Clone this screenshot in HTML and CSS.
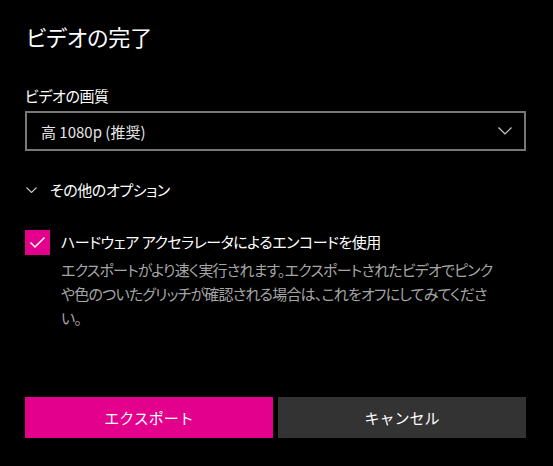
FILE: index.html
```html
<!DOCTYPE html>
<html lang="ja">
<head>
    <meta charset="UTF-8">
    <meta name="viewport" content="width=device-width, initial-scale=1.0">
    <title>ビデオの完了</title>
    <link rel="stylesheet" href="styles.css">
</head>
<body>
    <div class="dialog">
        <h1>ビデオの完了</h1>

        <!-- Quality -->
        <div class="field-label">ビデオの画質</div>
        <div class="select">
            <span>高 1080p (推奨)</span>
            <svg class="chevron" width="14" height="8" viewBox="0 0 14 8">
                <path d="M0.5 0.5 L7 7 L13.5 0.5" fill="none" stroke="#cccccc" stroke-width="1.2"/>
            </svg>
        </div>

        <!-- More options -->
        <div class="more">
            <svg class="chevron" width="11" height="6" viewBox="0 0 11 6">
                <path d="M0.5 0.5 L5.5 5.5 L10.5 0.5" fill="none" stroke="#cccccc" stroke-width="1.1"/>
            </svg>
            <span>その他のオプション</span>
        </div>

        <div class="check-row">
            <div class="checkbox">
                <svg width="25" height="25" viewBox="0 0 25 25">
                    <path d="M5.5 12.5 L10 17 L19.5 7.5" fill="none" stroke="#ffffff" stroke-width="1.5"/>
                </svg>
            </div>
            <div class="check-text">
                <div class="check-label">ハードウェア アクセラレータによるエンコードを使用</div>
                <div class="check-desc">エクスポートがより速く実行されます。エクスポートされたビデオでピンクや色のついたグリッチが確認される場合は、これをオフにしてみてください。</div>
            </div>
        </div>

        <div class="buttons">
            <button class="primary">エクスポート</button>
            <button class="secondary">キャンセル</button>
        </div>
    </div>
</body>
</html>
```

FILE: styles.css
```css
body {
    margin: 0;
    padding: 0;
    background-color: #000000;
    color: #ffffff;
    font-family: "Noto Sans CJK JP", "Noto Sans", sans-serif;
    font-feature-settings: "palt";
}
.dialog {
    padding: 20px 27px 0 25px;
}
h1 {
    margin: 0;
    font-size: 22px;
    font-weight: normal;
    line-height: 32px;
    padding-left: 1px;
}
.field-label {
    margin-top: 34px;
    font-size: 15px;
    line-height: 20px;
    letter-spacing: -0.4px;
}
.select {
    margin-top: 5px;
    height: 36px;
    border: 2px solid #777777;
    display: flex;
    align-items: center;
    justify-content: space-between;
    padding: 0 12px 0 14px;
    font-size: 15px;
    color: #e6e6e6;
}
.more {
    margin-top: 29px;
    display: flex;
    align-items: center;
    gap: 13px;
    font-size: 15px;
    line-height: 20px;
    letter-spacing: -0.4px;
    padding-left: 1px;
}
.check-row {
    margin-top: 30px;
    display: flex;
    gap: 11px;
}
.checkbox {
    flex: none;
    width: 25px;
    height: 25px;
    background-color: #e3008c;
}
.checkbox svg {
    display: block;
}
.check-text {
    width: 440px;
}
.check-label {
    font-size: 15px;
    line-height: 24px;
    letter-spacing: -0.5px;
}
.check-desc {
    margin-top: 4px;
    font-size: 15px;
    line-height: 24px;
    letter-spacing: -0.8px;
    color: #a6a6a6;
}
.buttons {
    margin-top: 67px;
    display: flex;
    gap: 5px;
}
button {
    flex: 1;
    height: 41px;
    border: none;
    border-radius: 0;
    font-family: inherit;
    font-size: 15px;
    color: #ffffff;
    cursor: pointer;
}
.primary {
    background-color: #e3008c;
}
.secondary {
    background-color: #333333;
}
```
